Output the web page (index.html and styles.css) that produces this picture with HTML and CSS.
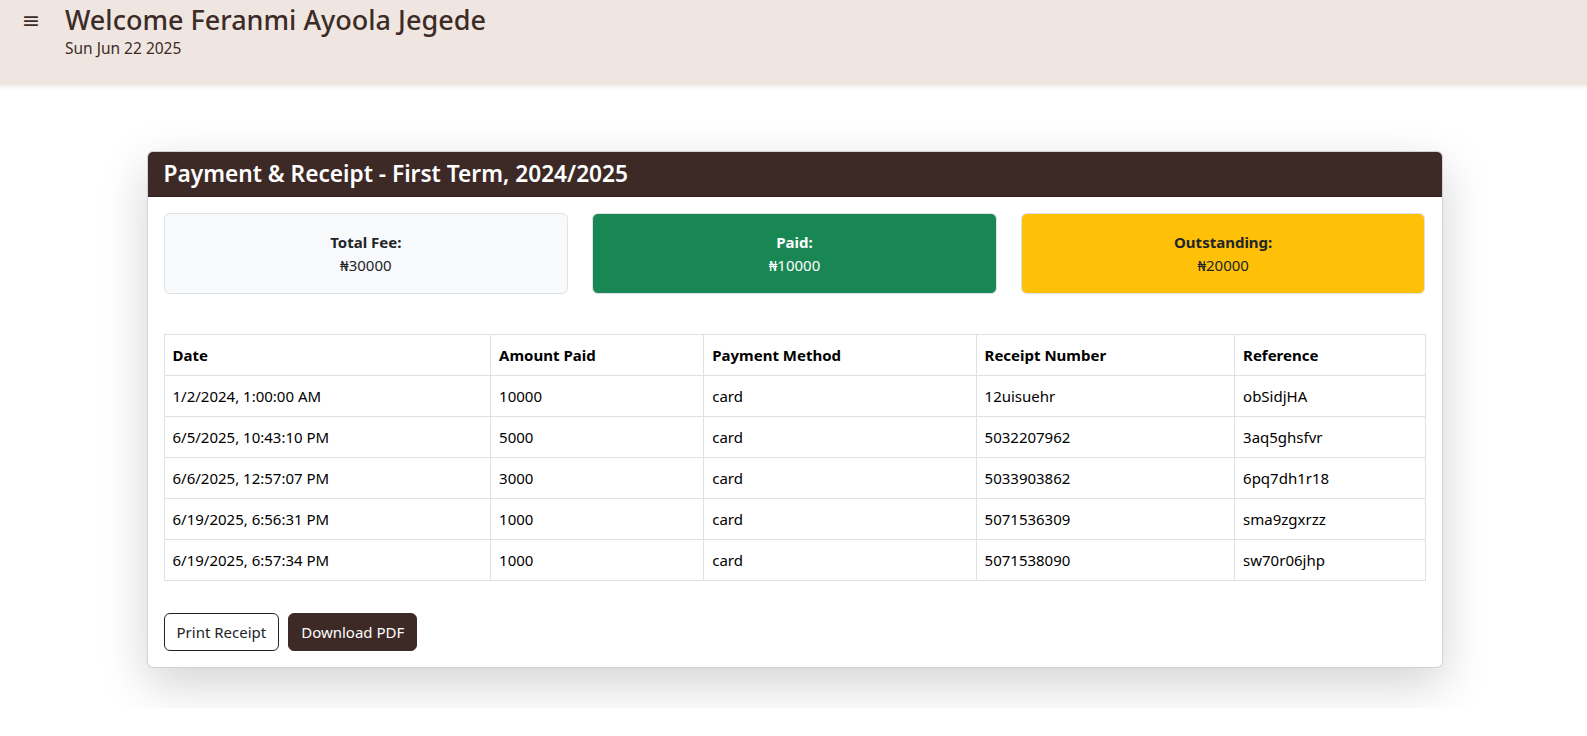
FILE: index.html
```html
<!DOCTYPE html>
<html lang="en">
<head>
<meta charset="utf-8">
<title>Payment &amp; Receipt</title>
<link rel="stylesheet" href="styles.css">
</head>
<body>
<header class="topbar">
  <button class="menu-btn" aria-label="menu">&#8801;</button>
  <div class="welcome">
    <h1 class="welcome-title">Welcome Feranmi Ayoola Jegede</h1>
    <div class="welcome-date">Sun Jun 22 2025</div>
  </div>
</header>
<main class="container">
  <section class="card">
    <div class="card-header"><h2 class="card-title">Payment &amp; Receipt - First Term, 2024/2025</h2></div>
    <div class="card-body">
      <div class="summary-row">
        <div class="summary-box box-light"><div class="summary-label">Total Fee:</div><div class="summary-value">&#8358;30000</div></div>
        <div class="summary-box box-success"><div class="summary-label">Paid:</div><div class="summary-value">&#8358;10000</div></div>
        <div class="summary-box box-warning"><div class="summary-label">Outstanding:</div><div class="summary-value">&#8358;20000</div></div>
      </div>
      <table class="pay-table">
        <colgroup>
          <col class="c-date"><col class="c-amount"><col class="c-method"><col class="c-receipt"><col class="c-ref">
        </colgroup>
        <thead>
          <tr><th>Date</th><th>Amount Paid</th><th>Payment Method</th><th>Receipt Number</th><th>Reference</th></tr>
        </thead>
        <tbody>
          <tr><td>1/2/2024, 1:00:00 AM</td><td>10000</td><td>card</td><td>12uisuehr</td><td>obSidjHA</td></tr>
          <tr><td>6/5/2025, 10:43:10 PM</td><td>5000</td><td>card</td><td>5032207962</td><td>3aq5ghsfvr</td></tr>
          <tr><td>6/6/2025, 12:57:07 PM</td><td>3000</td><td>card</td><td>5033903862</td><td>6pq7dh1r18</td></tr>
          <tr><td>6/19/2025, 6:56:31 PM</td><td>1000</td><td>card</td><td>5071536309</td><td>sma9zgxrzz</td></tr>
          <tr><td>6/19/2025, 6:57:34 PM</td><td>1000</td><td>card</td><td>5071538090</td><td>sw70r06jhp</td></tr>
        </tbody>
      </table>
      <div class="actions">
        <button class="btn btn-outline">Print Receipt</button>
        <button class="btn btn-dark">Download PDF</button>
      </div>
    </div>
  </section>
</main>
</body>
</html>
```

FILE: styles.css
```css
* { box-sizing: border-box; }
html, body { margin: 0; padding: 0; }
body {
  font-family: "Noto Sans", "Open Sans", sans-serif;
  font-size: 16px;
  line-height: 1.5;
  color: #212529;
  background: #fff;
}
.topbar {
  height: 85px;
  background: #efe6e1;
  display: flex;
  align-items: flex-start;
  padding: 4px 0 0 21px;
  box-shadow: 0 2px 4px rgba(0,0,0,0.08);
  color: #3d2b27;
}
.menu-btn {
  background: none;
  border: 0;
  padding: 0;
  margin-top: 3px;
  width: 20px;
  font-size: 22px;
  line-height: 28px;
  color: #3d2b27;
  font-family: "DejaVu Sans", sans-serif;
}
.welcome { margin-left: 24px; }
.welcome-title {
  margin: 0;
  font-size: 27px;
  font-weight: 500;
  line-height: 1.2;
  color: #3d2b27;
}
.welcome-date {
  font-size: 15.5px;
  line-height: 21px;
  margin-top: 2px;
  color: #3d2b27;
}
.container {
  max-width: 1322px;
  margin: 66px auto 40px;
  padding: 0 12px 0 14px;
}
.card {
  border: 1px solid rgba(0,0,0,0.175);
  border-radius: 6px;
  box-shadow: 0 16px 48px rgba(0,0,0,0.175);
  background: #fff;
  overflow: hidden;
}
.card-header {
  background: #3d2a26;
  padding: 8px 16px;
  border-bottom: 1px solid rgba(0,0,0,0.175);
}
.card-title {
  margin: 0;
  font-size: 22.7px;
  font-weight: 600;
  line-height: 28px;
  color: #fff;
}
.card-body { padding: 16px; }
.summary-row {
  display: grid;
  grid-template-columns: repeat(3, 1fr);
  gap: 24px;
  margin-bottom: 40px;
}
.summary-box {
  height: 81px;
  border-radius: 6px;
  border: 1px solid #dee2e6;
  display: flex;
  flex-direction: column;
  align-items: center;
  justify-content: center;
  text-align: center;
}
.summary-label { font-weight: 700; font-size: 15px; line-height: 23px; }
.summary-value { font-size: 15px; line-height: 23px; }
.box-light { background: #f8f9fa; color: #212529; }
.box-success { background: #198754; color: #fff; }
.box-warning { background: #ffc107; color: #212529; }
.pay-table {
  width: 100%;
  border-collapse: collapse;
  color: #000;
  font-size: 15px;
  margin-bottom: 32px;
}
.c-date { width: 25.9%; }
.c-amount { width: 16.9%; }
.c-method { width: 21.6%; }
.c-receipt { width: 20.5%; }
.c-ref { width: 15.1%; }
.pay-table th, .pay-table td {
  border: 1px solid #dee2e6;
  padding: 8px;
  text-align: left;
  line-height: 24px;
}
.pay-table th { font-weight: 700; }
.actions { display: flex; gap: 9px; }
.btn {
  font-family: inherit;
  font-size: 15px;
  line-height: 24px;
  padding: 6px 12px;
  border-radius: 6px;
  border: 1px solid #3d2a26;
  cursor: pointer;
}
.btn-outline { background: #fff; color: #212529; border-color: #212529; }
.btn-dark { background: #3d2a26; color: #fff; }
```
